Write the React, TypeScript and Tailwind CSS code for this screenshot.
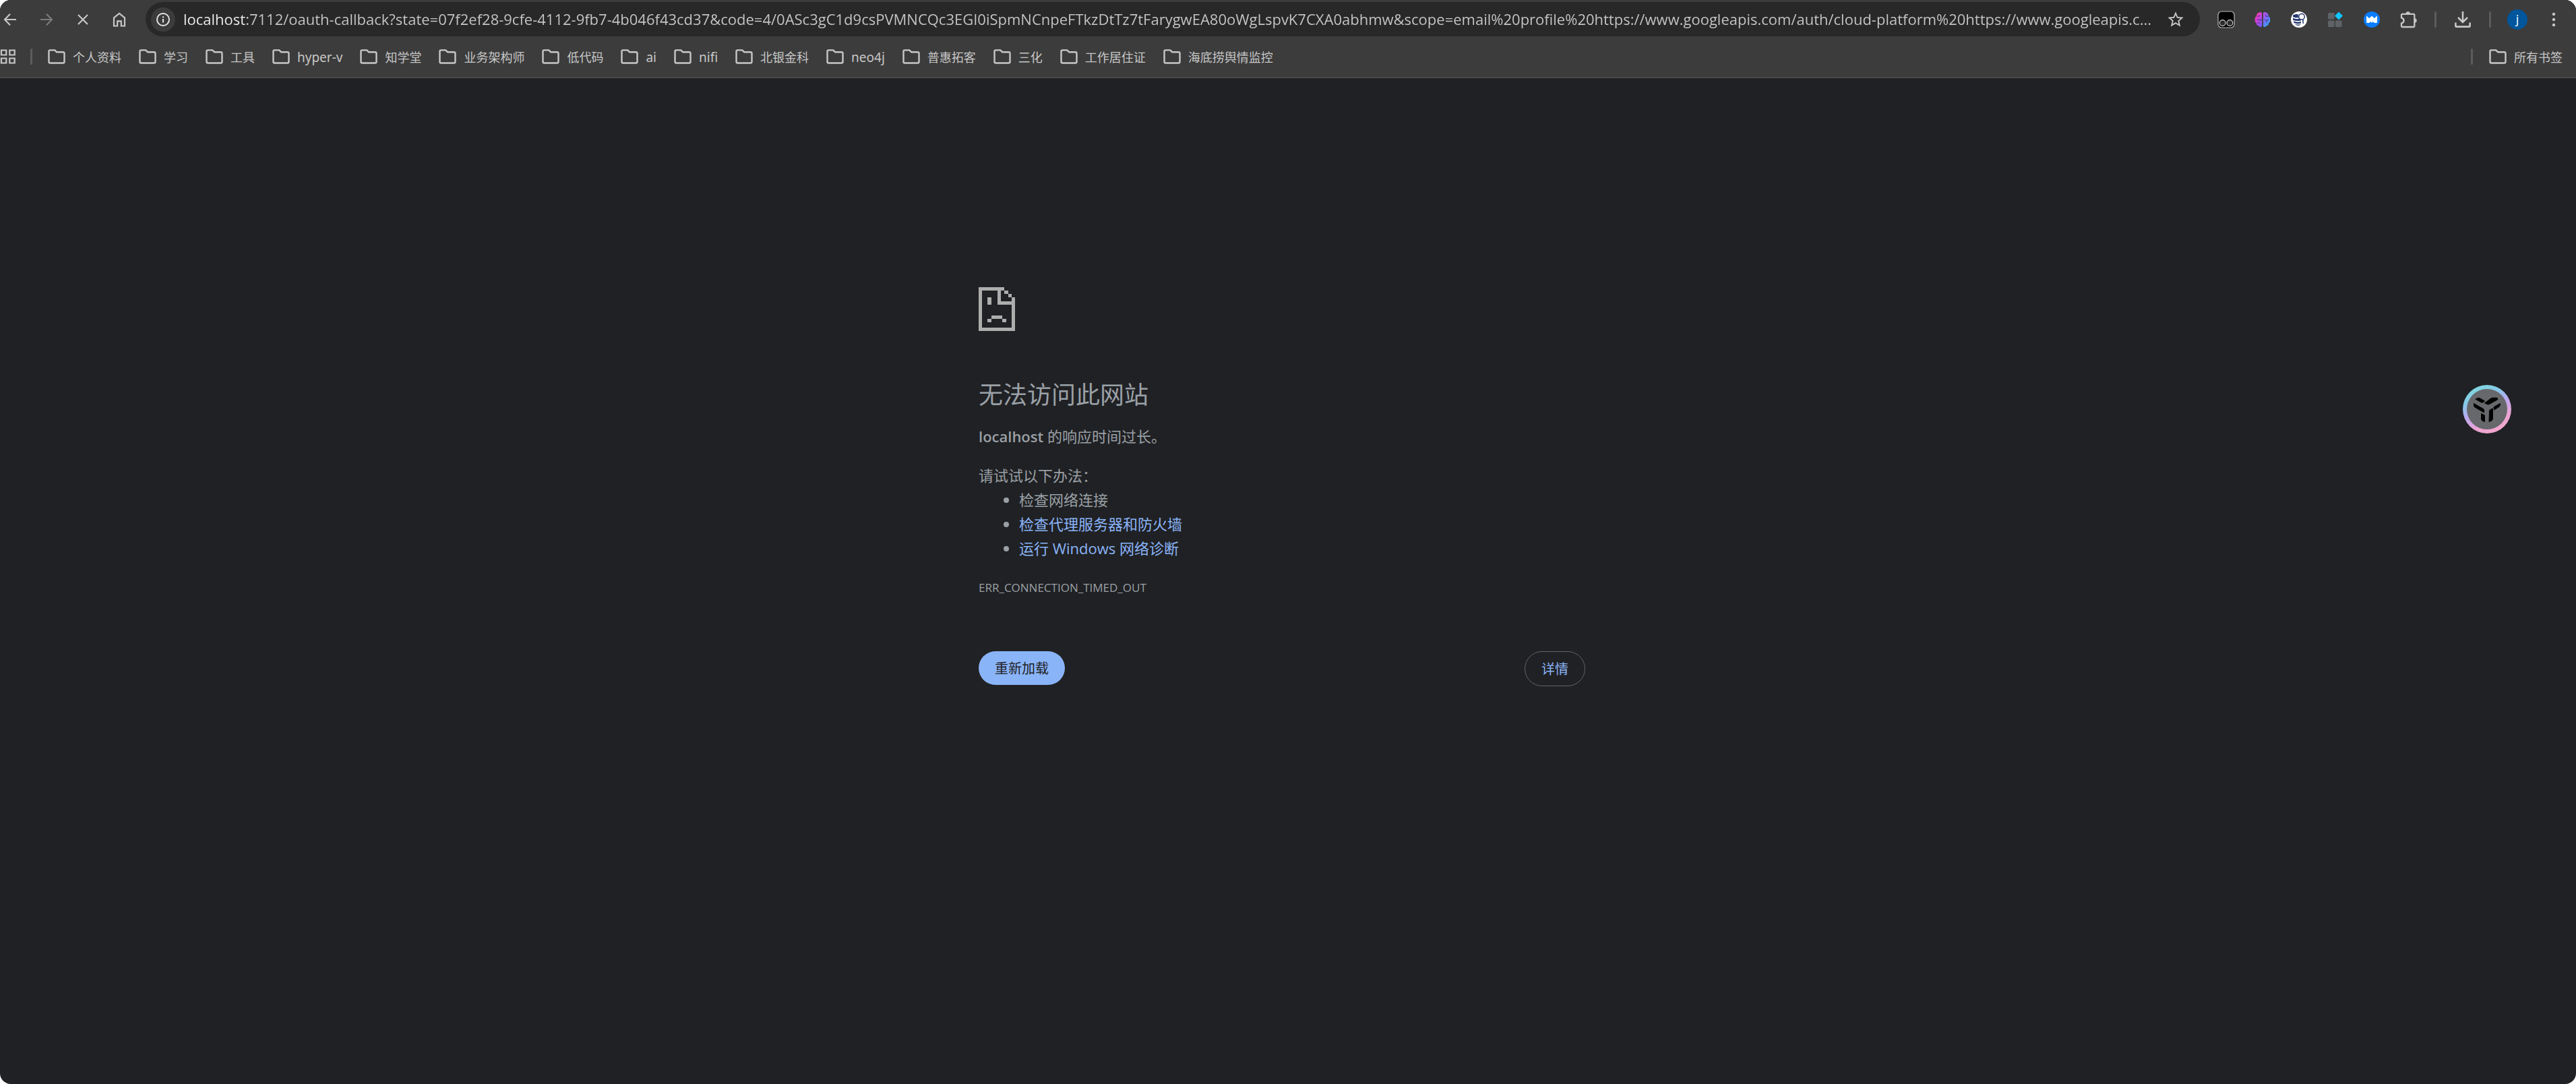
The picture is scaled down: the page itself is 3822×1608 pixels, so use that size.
import React, { useState } from 'react';
import { MdStarBorder } from 'react-icons/md';

const DEFAULT_URL =
  'localhost:7112/oauth-callback?state=07f2ef28-9cfe-4112-9fb7-4b046f43cd37&code=4/0ASc3gC1d9csPVMNCQc3EGI0iSpmNCnpeFTkzDtTz7tFarygwEA80oWgLspvK7CXA0abhmw&scope=email%20profile%20https://www.googleapis.com/auth/cloud-platform%20https://www.googleapis.c...';

const bookmarks = [
  '个人资料', '学习', '工具', 'hyper-v', '知学堂', '业务架构师', '低代码', 'ai',
  'nifi', '北银金科', 'neo4j', '普惠拓客', '三化', '工作居住证', '海底捞舆情监控',
];

const isLatin = (name: string) => /^[\w-]+$/.test(name);

const FolderIcon = () => (
  <svg width="26" height="22" viewBox="0 0 26 22" fill="none" stroke="#c7c7c7" strokeWidth="2.4" strokeLinejoin="round" className="shrink-0">
    <path d="M1.5 3V18.5Q1.5 20.5 3.5 20.5H22.5Q24.5 20.5 24.5 18.5V6.2Q24.5 4.2 22.5 4.2H13L10.2 1.4H3.5Q1.5 1.4 1.5 3Z" />
  </svg>
);

const Divider = () => <span className="h-6 w-[3px] shrink-0 rounded-full bg-[#5c5c5c]" />;

const ToolButton = ({ label, children }: { label: string; children: React.ReactNode }) => (
  <button aria-label={label} className="flex h-[54px] w-[54px] shrink-0 items-center justify-center">
    {children}
  </button>
);

const TamperIcon = () => (
  <svg width="26" height="26" viewBox="0 0 26 26">
    <rect x="1" y="1" width="24" height="24" rx="5" fill="#000" stroke="#b9b9b9" strokeWidth="1.2" />
    <circle cx="7.6" cy="18" r="4.4" fill="#2b2b2b" stroke="#d0d0d0" strokeWidth="1.2" />
    <circle cx="18.4" cy="18" r="4.4" fill="#2b2b2b" stroke="#d0d0d0" strokeWidth="1.2" />
  </svg>
);

const BrainIcon = () => (
  <svg width="24" height="24" viewBox="0 0 24 24">
    <defs>
      <linearGradient id="brainLeft" x1="0" y1="0" x2="0.7" y2="1">
        <stop offset="0" stopColor="#ffa51f" />
        <stop offset="0.35" stopColor="#e636c8" />
        <stop offset="1" stopColor="#7d5cff" />
      </linearGradient>
      <linearGradient id="brainRight" x1="0" y1="0" x2="0.6" y2="1">
        <stop offset="0" stopColor="#c44be0" />
        <stop offset="0.5" stopColor="#7a68f5" />
        <stop offset="1" stopColor="#2fa8ff" />
      </linearGradient>
    </defs>
    <path d="M11 2Q8-.2 5.5 2.2 2.6 3.3 3 7 0 8.5.8 12-.3 15.5 2.8 17.2 3 21 6.5 21.5 8.5 24.5 11 22Z" fill="url(#brainLeft)" />
    <path d="M12.8 2Q15.8-.2 18.3 2.2 21.2 3.3 20.8 7 23.8 8.5 23 12 24.1 15.5 21 17.2 20.8 21 17.3 21.5 15.3 24.5 12.8 22Z" fill="url(#brainRight)" />
    <path d="M4 8Q6 5.5 8 7M4 12.5H11M4.5 17Q6 15.5 8.5 18M16 4.5L17.5 7.5 20.5 7M15 12L18 14 21 11.5M18 14V16.5" fill="none" stroke="#43327c" strokeWidth="1" />
  </svg>
);

const DatabaseIcon = () => (
  <svg width="24" height="24" viewBox="0 0 24 24">
    <circle cx="12" cy="12" r="12" fill="#fff" />
    <path d="M3 5.5Q7 3 11.5 4.5 10 7 11.3 9 6.5 10 3 8ZM3 9.8Q7.5 12 12.5 10.8L15 12.5V13.5Q8 15 3 12.7ZM4 14.5Q9 16.5 15 15V17.5Q9.5 19 4.5 17ZM6 18.7Q10.5 20 15 19Q12 22 8.5 20.6Z" fill="#27386f" />
    <circle cx="16" cy="7.8" r="4.3" fill="#fff" stroke="#27386f" strokeWidth="1.5" />
    <path d="M18.5 12Q17 14.5 18.5 18" fill="none" stroke="#27386f" strokeWidth="1.5" />
  </svg>
);

const TilesIcon = () => (
  <svg width="22" height="24" viewBox="0 0 22 24">
    <rect x="0" y="2" width="9.5" height="9.5" rx="1.5" fill="#5f6368" />
    <rect x="0" y="13.5" width="9.5" height="9.5" rx="1.5" fill="#5f6368" />
    <rect x="11" y="13.5" width="9.5" height="9.5" rx="1.5" fill="#5f6368" />
    <path d="M16 1.2L21.5 6.5 16 12 10.5 6.5Z" fill="#12c4ff" stroke="#12c4ff" strokeWidth="1" strokeLinejoin="round" />
  </svg>
);

const CrownIcon = () => (
  <svg width="24" height="24" viewBox="0 0 24 24">
    <circle cx="12" cy="12" r="12" fill="#0a7cff" />
    <path d="M4.5 7L8 10.5 12 7 16 10.5 19.5 7V16.5H15.5L13.8 14.5 12 16.5 10.2 14.5 8.5 16.5H4.500Z" fill="#fff" stroke="#fff" strokeWidth="0.8" strokeLinejoin="round" />
  </svg>
);

const PuzzleIcon = () => (
  <svg width="26" height="26" viewBox="0 0 26 26" fill="none">
    <path d="M4.5 4.8H21Q22.3 4.8 22.3 6.1V22.7Q22.3 24 21 24H4.5Q3 24 3 22.7V18.5Q6.6 17.5 6.6 14.4T3 10.3V6.2Q3 4.8 4.5 4.8Z" stroke="#c7c7c7" strokeWidth="2.3" />
    <path d="M9.5 4.5a3.2 3.2 0 0 1 6.4 0zM22.5 11.2a3.2 3.2 0 0 1 0 6.4z" fill="#c7c7c7" />
  </svg>
);

const SadPageIcon = () => (
  <svg width="54" height="65" viewBox="66 77 162 195" fill="#adadad" shapeRendering="crispEdges">
    <path d="M66 77H180V93H81V257H213V156H150V93H165V140H213V123H228V272H66Z" />
    <path d="M180 93h17v15h-17zM197 108h16v15h-16zM106 123h17v33h-17zM123 204h48v15h-48zM106 219h17v15h-17zM171 219h17v15h-17z" />
  </svg>
);

const AssistantButton = () => (
  <button
    aria-label="assistant"
    className="absolute top-[571px] right-24 flex h-[72px] w-[72px] items-center justify-center rounded-full bg-linear-[155deg,#7fd8e0_10%,#86c8e6_30%,#b9a8f0_48%,#eba4d4_70%,#f3a6cc_90%]"
  >
    <span className="flex h-15 w-15 items-center justify-center rounded-full bg-[#66686b]">
      <svg width="42" height="38" viewBox="0 0 42 38" fill="#000" stroke="#000" strokeLinejoin="round">
        <path d="M4.5 4.2L7 2.8Q8.5 2 10 2.8L17 6.8L13.5 9.2Z" strokeWidth="1.5" />
        <path d="M17.5 9.8L26.5 3.2Q28 2.2 30 2.2H36L37 4.5L24.5 11.5Q22.5 12.3 21 11.6Z" />
        <path d="M1.5 10.5L15.5 18.5Q17.5 20 16.5 24L2.5 15.8Q1 14 1.5 10.5Z" />
        <path d="M40.5 10.5Q41 14 38.5 15.8L31.5 20L31 16.5Q31.2 15.5 32.5 14.8Z" />
        <path d="M12.5 25.5L17.5 28V37.5Q13.5 37 12.5 34Z" />
        <path d="M24.5 21Q25 19.5 29.5 18V33.5Q28.5 37 24 37.5Z" />
      </svg>
    </span>
  </button>
);

const App = () => {
  const [url, setUrl] = useState(DEFAULT_URL);

  return (
    <div className="min-h-screen bg-white font-['Open_Sans','Noto_Sans_CJK_SC',sans-serif]">
      <div className="relative flex min-h-screen flex-col overflow-hidden rounded-2xl bg-[#202124]">
        <header className="border-b-2 border-[#484848] bg-[#3c3c3c] pb-[3px]">
          {/* Toolbar */}
          <div className="flex h-[57px] items-center pr-1.5">
            <nav className="-ml-3 flex">
              <ToolButton label="返回">
                <svg width="20" height="20" viewBox="0 0 20 20" fill="none" stroke="#c7c7c7" strokeWidth="2.2"><path d="M19 10H2.5M10 1.8L2 10L10 18.2" /></svg>
              </ToolButton>
              <ToolButton label="前进">
                <svg width="20" height="20" viewBox="0 0 20 20" fill="none" stroke="#7b7b7b" strokeWidth="2.2"><path d="M1 10H17.5M10 1.8L18 10L10 18.2" /></svg>
              </ToolButton>
              <ToolButton label="停止">
                <svg width="16" height="16" viewBox="0 0 16 16" fill="none" stroke="#c7c7c7" strokeWidth="2.2"><path d="M1 1L15 15M15 1L1 15" /></svg>
              </ToolButton>
              <ToolButton label="主页">
                <svg width="20" height="22" viewBox="0 0 20 22" fill="none" stroke="#c7c7c7" strokeWidth="2.2"><path d="M2 8.3L10 2L18 8.3V20.5H12.8V13.3H7.2V20.5H2Z" /></svg>
              </ToolButton>
            </nav>

            <div className="mx-3 flex h-[51px] min-w-0 flex-1 items-center rounded-full bg-[#282828] pr-[18px] pl-2">
              <button aria-label="查看网站信息" className="mr-3 flex h-9 w-9 shrink-0 items-center justify-center rounded-full bg-[#3c3c3c]">
                <svg width="20" height="20" viewBox="0 0 20 20" fill="none" stroke="#e3e3e3" strokeWidth="2"><circle cx="10" cy="10" r="9" /><path d="M10 9V14.5M10 5.2V7.2" /></svg>
              </button>
              <input
                type="text"
                aria-label="地址和搜索栏"
                value={url}
                onChange={(e) => setUrl(e.target.value)}
                spellCheck={false}
                className="h-9 min-w-0 flex-1 bg-linear-to-r from-[#f0f0f0] from-[94px] to-[#c7c7c7] to-[94px] bg-clip-text pb-0.5 text-[22px] text-transparent outline-none"
              />
              <button aria-label="为此标签页添加书签" className="flex h-9 w-9 shrink-0 items-center justify-center text-[#c7c7c7]">
                <MdStarBorder size={28} />
              </button>
            </div>

            <ToolButton label="Tampermonkey"><TamperIcon /></ToolButton>
            <ToolButton label="Brain"><BrainIcon /></ToolButton>
            <ToolButton label="Database"><DatabaseIcon /></ToolButton>
            <ToolButton label="Tiles"><TilesIcon /></ToolButton>
            <ToolButton label="Crown"><CrownIcon /></ToolButton>
            <ToolButton label="扩展程序"><PuzzleIcon /></ToolButton>
            <div className="flex w-[27px] justify-center"><Divider /></div>
            <ToolButton label="下载">
              <svg width="24" height="24" viewBox="0 0 24 24" fill="none" stroke="#c7c7c7" strokeWidth="2.6"><path d="M12 0V15.5M5 9L12 16L19 9M1.4 16.5V21.3Q1.4 22.6 2.7 22.6H21.3Q22.6 22.6 22.6 21.3V16.5" /></svg>
            </ToolButton>
            <div className="flex w-[27px] justify-center"><Divider /></div>
            <ToolButton label="用户">
              <span className="h-[30px] w-[30px] rounded-full bg-[#00569c] text-center text-lg leading-[28px] text-white">j</span>
            </ToolButton>
            <ToolButton label="更多">
              <svg width="6" height="22" viewBox="0 0 6 22" fill="#c7c7c7"><circle cx="3" cy="3" r="2.2" /><circle cx="3" cy="11" r="2.2" /><circle cx="3" cy="19" r="2.2" /></svg>
            </ToolButton>
          </div>

          {/* Bookmarks bar */}
          <div className="flex h-[54px] items-center pr-5 font-['Noto_Sans','Noto_Sans_CJK_SC',sans-serif] text-lg leading-[52px] whitespace-nowrap text-[#c7c7c7]">
            <button aria-label="应用" className="mr-[22px]">
              <svg width="23" height="22" viewBox="0 0 23 22" fill="none" stroke="#c7c7c7" strokeWidth="2.2"><path d="M1.9 1.5h7.4v7h-7.4zM14.3 1.5h7.4v7h-7.4zM1.9 13.5h7.4v7h-7.4zM14.3 13.5h7.4v7h-7.4z" /></svg>
            </button>
            <Divider />
            <div className="ml-[23px] flex gap-[26px]">
              {bookmarks.map((name) => (
                <button key={name} className="flex items-center gap-[11px]">
                  <FolderIcon />
                  <span className={isLatin(name) ? 'pt-0.5 text-[19px]' : 'pt-0.5'}>{name}</span>
                </button>
              ))}
            </div>
            <div className="ml-auto flex items-center">
              <Divider />
              <button className="ml-6 flex items-center gap-[11px]">
                <FolderIcon />
                <span className="pt-0.5">所有书签</span>
              </button>
            </div>
          </div>
        </header>

        {/* Error page */}
        <main className="flex-1 pr-[18px] text-[22px] leading-9 text-[#9aa0a6]">
          <div className="mx-auto w-full max-w-[900px] pt-[310px]">
            <SadPageIcon />
            <h1 className="mt-[72px] text-4xl leading-[45px]">无法访问此网站</h1>
            <p className="mt-[21px]"><strong className="font-semibold">localhost</strong> 的响应时间过长。</p>
            <p className="mt-[22px]">请试试以下办法：</p>
            <ul className="list-disc pl-15">
              <li>检查网络连接</li>
              <li><a href="#proxy" className="text-[#8ab4f8]">检查代理服务器和防火墙</a></li>
              <li><a href="#diagnose" className="text-[#8ab4f8]">运行 Windows 网络诊断</a></li>
            </ul>
            <p className="mt-[23px] text-[17px] leading-9">ERR_CONNECTION_TIMED_OUT</p>
            <div className="mt-[76px] flex items-start justify-between text-xl">
              <button className="h-[50px] rounded-full bg-[#8ab4f8] px-6 pt-0.5 text-[#202124]">重新加载</button>
              <button className="h-[52px] rounded-full border border-[#5f6368] px-6 pt-0.5 text-[#8ab4f8]">详情</button>
            </div>
          </div>
        </main>

        <AssistantButton />
      </div>
    </div>
  );
};

export default App;
